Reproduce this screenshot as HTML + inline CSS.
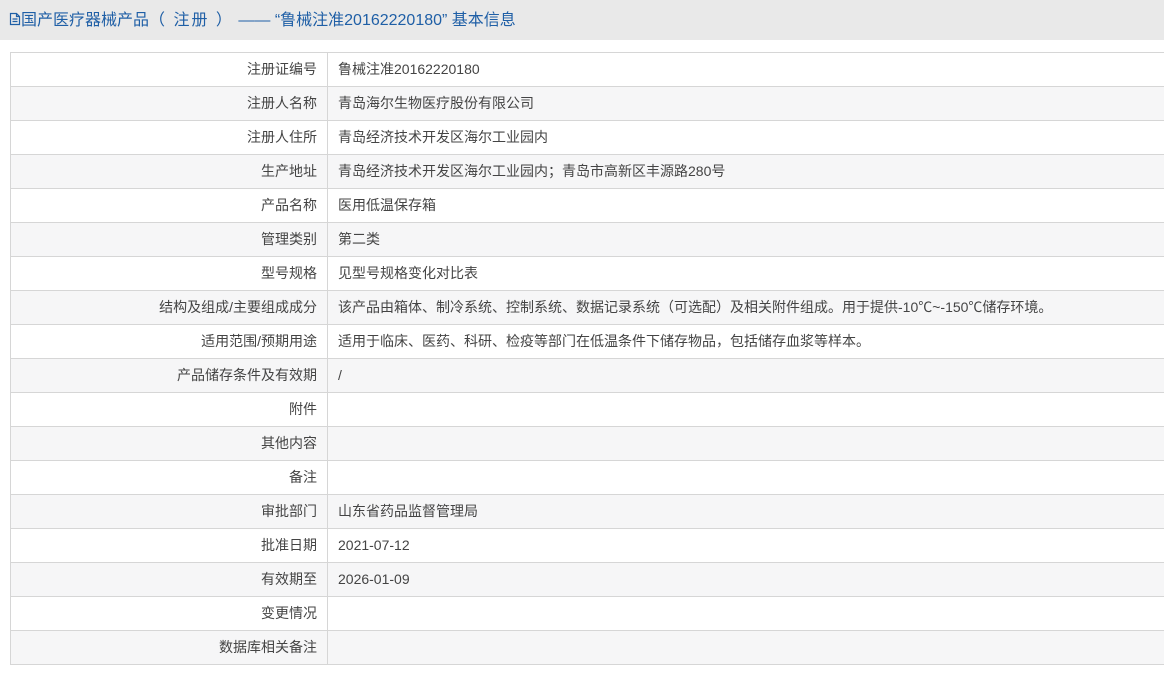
<!DOCTYPE html>
<html><head><meta charset="utf-8"><style>
body{margin:0;background:#fff;font-family:"Liberation Sans","Noto Sans CJK SC",sans-serif;font-size:14px;color:#444;width:1164px;height:674px;overflow:hidden}
.hd{position:absolute;left:0;top:0;width:1164px;height:40px;background:#e9e9e9;color:#1f5fa6;font-size:16px;line-height:42px}
.hd span{position:absolute;left:9px;top:0;white-space:nowrap}
table{position:absolute;left:10px;top:52px;border-collapse:collapse;width:1160px}
td{height:33px;border:1px solid #d6d6d6;padding:0;line-height:33px;white-space:nowrap}
td.l{width:306px;text-align:right;padding-right:10px}
td.r{padding-left:10px}
tr:nth-child(even){background:#f6f6f7}
</style></head><body>
<div class="hd"><span><svg width="12" height="14" viewBox="0 0 12 14" style="vertical-align:-1px"><path d="M1.5 1.5h6l3 3v8h-9z M7.5 1.5v3h3 M3.5 7h5 M3.5 9.5h5" fill="none" stroke="#1f5fa6" stroke-width="1.2"/></svg>国产医疗器械产品<span style="position:static;letter-spacing:2px">（ 注册 ）</span> —— “鲁械注准20162220180”&nbsp;基本信息</span></div>
<table>
<tr><td class="l">注册证编号</td><td class="r">鲁械注准20162220180</td></tr>
<tr><td class="l">注册人名称</td><td class="r">青岛海尔生物医疗股份有限公司</td></tr>
<tr><td class="l">注册人住所</td><td class="r">青岛经济技术开发区海尔工业园内</td></tr>
<tr><td class="l">生产地址</td><td class="r">青岛经济技术开发区海尔工业园内；青岛市高新区丰源路280号</td></tr>
<tr><td class="l">产品名称</td><td class="r">医用低温保存箱</td></tr>
<tr><td class="l">管理类别</td><td class="r">第二类</td></tr>
<tr><td class="l">型号规格</td><td class="r">见型号规格变化对比表</td></tr>
<tr><td class="l">结构及组成/主要组成成分</td><td class="r">该产品由箱体、制冷系统、控制系统、数据记录系统（可选配）及相关附件组成。用于提供-10℃~-150℃储存环境。</td></tr>
<tr><td class="l">适用范围/预期用途</td><td class="r">适用于临床、医药、科研、检疫等部门在低温条件下储存物品，包括储存血浆等样本。</td></tr>
<tr><td class="l">产品储存条件及有效期</td><td class="r">/</td></tr>
<tr><td class="l">附件</td><td class="r"></td></tr>
<tr><td class="l">其他内容</td><td class="r"></td></tr>
<tr><td class="l">备注</td><td class="r"></td></tr>
<tr><td class="l">审批部门</td><td class="r">山东省药品监督管理局</td></tr>
<tr><td class="l">批准日期</td><td class="r">2021-07-12</td></tr>
<tr><td class="l">有效期至</td><td class="r">2026-01-09</td></tr>
<tr><td class="l">变更情况</td><td class="r"></td></tr>
<tr><td class="l">数据库相关备注</td><td class="r"></td></tr>
</table>
</body></html>
